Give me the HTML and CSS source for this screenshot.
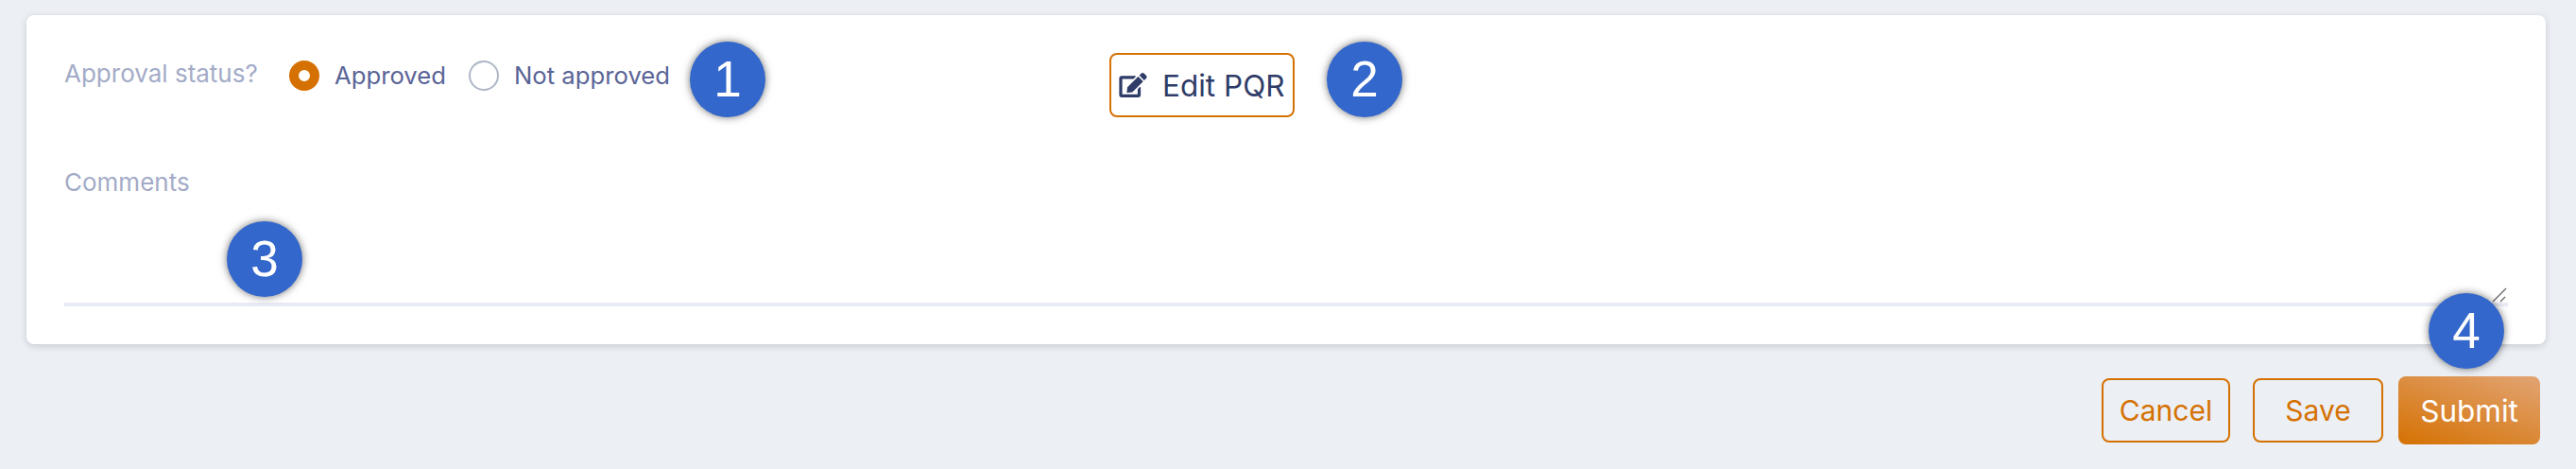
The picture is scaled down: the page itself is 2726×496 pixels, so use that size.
FILE: index.html
```html
<!DOCTYPE html>
<html lang="en">
<head>
<meta charset="utf-8">
<title>Approval</title>
<link rel="stylesheet" href="styles.css">
</head>
<body>
<main class="page">
  <section class="card">
    <div class="top-row">
      <fieldset class="status">
        <span class="status-label">Approval status?</span>
        <label class="choice"><span class="radio radio-on"></span><span class="choice-text">Approved</span></label>
        <label class="choice"><span class="radio"></span><span class="choice-text">Not approved</span></label>
      </fieldset>
      <button class="btn edit" type="button">
        <svg class="edit-icon" viewBox="0 0 576 512" aria-hidden="true"><path d="M402.6 83.2l90.2 90.2c3.8 3.8 3.8 10 0 13.8L274.4 405.6l-92.8 10.3c-12.4 1.4-22.9-9.1-21.5-21.5l10.3-92.8L388.8 83.2c3.8-3.8 10-3.8 13.8 0zm162-22.9l-48.8-48.8c-15.2-15.2-39.9-15.2-55.2 0l-35.4 35.4c-3.8 3.8-3.8 10 0 13.8l90.2 90.2c3.8 3.8 10 3.8 13.8 0l35.4-35.4c15.2-15.3 15.2-40 0-55.2zM384 346.2V448H64V128h229.8c3.2 0 6.2-1.3 8.5-3.5l40-40c7.6-7.6 2.2-20.5-8.5-20.5H48C21.5 64 0 85.5 0 112v352c0 26.5 21.5 48 48 48h352c26.5 0 48-21.5 48-48V306.2c0-10.7-12.9-16-20.5-8.5l-40 40c-2.2 2.3-3.5 5.3-3.5 8.5z"/></svg>
        Edit PQR
      </button>
    </div>
    <label class="comments">
      <span class="comments-label">Comments</span>
      <textarea class="comments-input"></textarea>
      <svg class="grip" viewBox="0 0 16 16" aria-hidden="true"><path d="M15 1 1 15M14 10 9 15"/></svg>
    </label>
  </section>
  <div class="actions">
    <button class="btn outline cancel" type="button">Cancel</button>
    <button class="btn outline save" type="button">Save</button>
    <button class="btn primary" type="button">Submit</button>
  </div>
  <span class="badge badge-1">1</span>
  <span class="badge badge-2">2</span>
  <span class="badge badge-3">3</span>
  <span class="badge badge-4">4</span>
</main>
</body>
</html>
```
FILE: styles.css
```css
* { box-sizing: border-box; }
html, body { margin: 0; height: 100%; }
body {
  background: #eceff4;
  font-family: Inter, "Liberation Sans", sans-serif;
  overflow: hidden;
}
.page {
  position: relative;
  height: 496px;
  padding: 16px 32px 0 28px;
}
.card {
  height: 348px;
  background: #fff;
  border-radius: 8px;
  box-shadow: 0 2px 7px rgba(60, 70, 90, .22);
  padding: 40px 40px 0;
}
.top-row {
  display: flex;
  align-items: flex-start;
}
.status {
  display: flex;
  align-items: center;
  width: 1106px;
  height: 48px;
  margin: 0;
  padding: 0;
  border: 0;
}
.status-label {
  width: 238px;
  color: #a3abc7;
  font-size: 26px;
  margin-top: -6px;
}
.choice {
  display: flex;
  align-items: center;
  gap: 16px;
  margin-right: 24px;
  color: #5a6496;
  font-size: 25.7px;
}
.choice-text {
  margin-top: -2px;
}
.radio {
  width: 32px;
  height: 32px;
  border-radius: 50%;
  border: 2px solid #aeb7c6;
  background: #fff;
}
.radio-on {
  border: 10px solid #d57102;
}
.btn {
  font-family: inherit;
  border-radius: 8px;
  background: transparent;
  padding: 0;
}
.edit {
  display: flex;
  align-items: center;
  gap: 16px;
  width: 196px;
  height: 68px;
  padding: 0 0 0 8px;
  border: 2px solid #d57102;
  color: #2f3c68;
  font-size: 31.5px;
}
.edit-icon {
  width: 30px;
  height: 26px;
  fill: #2f3c68;
  flex: none;
}
.comments {
  display: block;
  position: relative;
  margin-top: 53px;
}
.comments-label {
  display: block;
  color: #a3abc7;
  font-size: 26px;
  line-height: 32px;
}
.comments-input {
  display: block;
  width: 100%;
  height: 115px;
  padding: 0;
  border: 0;
  border-bottom: 4px solid #e8ebf3;
  outline: 0;
  resize: none;
  background: #fff;
}
.grip {
  position: absolute;
  right: 1px;
  bottom: 4px;
  width: 16px;
  height: 16px;
  fill: none;
  stroke: #6a6a6a;
  stroke-width: 1.4;
}
.actions {
  display: flex;
  justify-content: flex-end;
  align-items: center;
  gap: 24px;
  margin-top: 34px;
  padding-right: 6px;
}
.outline {
  height: 68px;
  border: 2px solid #d57102;
  color: #d57102;
  font-size: 30px;
}
.cancel { width: 136px; }
.save { width: 138px; margin-right: -8px; }
.primary {
  width: 150px;
  height: 72px;
  border: 0;
  color: #fff;
  font-size: 31.5px;
  background: linear-gradient(20deg, #d57102 0%, #e2a473 100%);
}
.badge {
  position: absolute;
  width: 80px;
  height: 80px;
  border-radius: 50%;
  background: #3367cc;
  color: #fff;
  font-family: "Liberation Sans", Arial, sans-serif;
  font-size: 53px;
  line-height: 80px;
  text-align: center;
  box-shadow: 0 0 8px rgba(0, 0, 0, .55);
}
.badge-1 { left: 730px; top: 44px; }
.badge-2 { left: 1404px; top: 44px; }
.badge-3 { left: 240px; top: 234px; }
.badge-4 { left: 2570px; top: 310px; }
```
